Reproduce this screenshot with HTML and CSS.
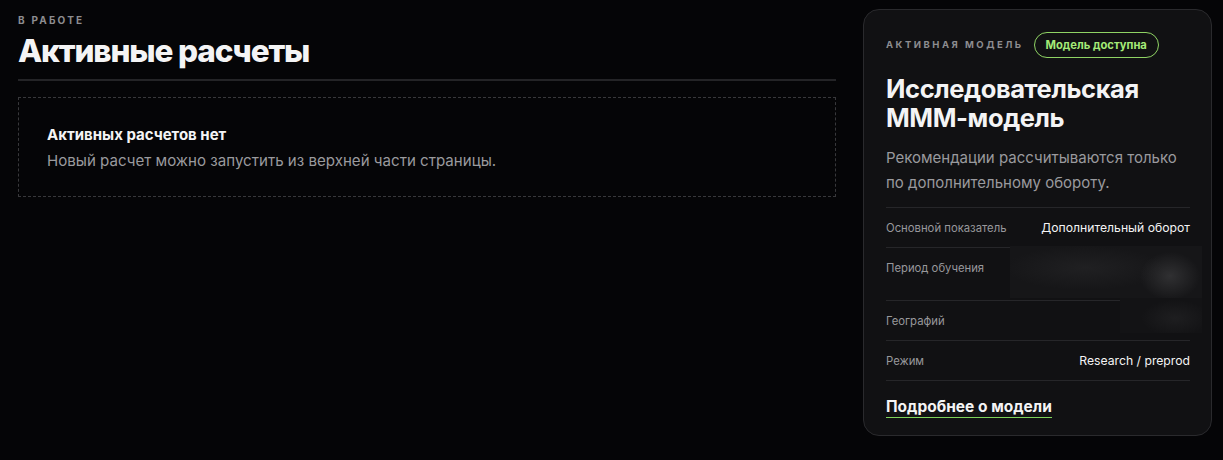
FILE: index.html
```html
<!DOCTYPE html>
<html lang="ru">
<head>
  <meta charset="UTF-8">
  <title>Активные расчеты</title>
  <link rel="stylesheet" href="styles.css">
</head>
<body>

<div class="page">
  <section class="runs">
    <div class="eyebrow">В работе</div>
    <h1>Активные расчеты</h1>
    <div class="empty">
      <h3>Активных расчетов нет</h3>
      <p>Новый расчет можно запустить из верхней части страницы.</p>
    </div>
  </section>

  <aside class="model-card">
    <div class="card-head">
      <span class="eyebrow small">Активная модель</span>
      <span class="badge">Модель доступна</span>
    </div>
    <h2>Исследовательская ММM-модель</h2>
    <p class="desc">Рекомендации рассчитываются только по дополнительному обороту.</p>

    <div class="facts">
      <div class="fact">
        <span class="label">Основной показатель</span>
        <span class="value">Дополнительный оборот</span>
      </div>
      <div class="fact tall">
        <span class="label">Период обучения</span>
        <span class="value"></span>
      </div>
      <div class="fact">
        <span class="label">Географий</span>
        <span class="value"></span>
      </div>
      <div class="fact">
        <span class="label">Режим</span>
        <span class="value">Research / preprod</span>
      </div>
      <div class="redact one"></div>
      <div class="redact two"></div>
    </div>

    <a class="more" href="#">Подробнее о модели</a>
  </aside>
</div>

</body>
</html>
```

FILE: styles.css
```css
body {
  margin: 0;
  background: #050507;
  color: #f4f4f5;
  font-family: Inter, "Noto Sans", sans-serif;
}
.page {
  display: grid;
  grid-template-columns: 1fr 349px;
  gap: 27px;
  padding: 9px 11px 0 18px;
  align-items: start;
}
.runs {
  padding-top: 4px;
}
.eyebrow {
  font-size: 10px;
  line-height: 14px;
  font-weight: 700;
  letter-spacing: 2.2px;
  text-transform: uppercase;
  color: #8d8d90;
}
h1 {
  margin: 5px 0 0;
  font-size: 31.5px;
  line-height: 38px;
  font-weight: 800;
  letter-spacing: -1.15px;
  padding-bottom: 9px;
  border-bottom: 2px solid #242427;
}
.empty {
  margin-top: 16px;
  border: 1px dashed #38383b;
  padding: 26px 28px 24px;
}
.empty h3 {
  margin: 0;
  font-size: 15px;
  line-height: 22px;
  font-weight: 700;
}
.empty p {
  margin: 4px 0 0;
  font-size: 15.1px;
  line-height: 22px;
  color: #9a9a9e;
}
.model-card {
  background: #111113;
  border: 1px solid #2a2a2d;
  border-radius: 16px;
  padding: 22px 21px 17px 22px;
}
.card-head {
  display: flex;
  align-items: center;
  gap: 10px;
}
.eyebrow.small {
  font-size: 9.5px;
  letter-spacing: 2.5px;
}
.badge {
  border: 1px solid #8fd364;
  border-radius: 13px;
  padding: 0 11px;
  height: 24px;
  line-height: 24px;
  font-size: 11.2px;
  font-weight: 700;
  color: #a4ea77;
}
h2 {
  margin: 16px 0 0;
  font-size: 25.5px;
  line-height: 29px;
  font-weight: 700;
  letter-spacing: -0.4px;
}
.desc {
  margin: 13px 0 0;
  font-size: 15px;
  line-height: 25px;
  color: #9a9a9e;
}
.facts {
  position: relative;
  margin-top: 12px;
  border-top: 1px solid #262629;
}
.fact {
  display: flex;
  justify-content: space-between;
  align-items: flex-start;
  padding: 12px 0 11px;
  border-bottom: 1px solid #262629;
  font-size: 11.3px;
  line-height: 16px;
}
.fact.tall {
  padding-bottom: 24px;
}
.label {
  color: #98989c;
}
.value {
  font-size: 12.2px;
  color: #f4f4f5;
}
.redact {
  position: absolute;
}
.redact.one {
  top: 38px;
  left: 124px;
  width: 192px;
  height: 52px;
  background: radial-gradient(ellipse 30px 24px at 160px 30px, #303032, transparent),
              radial-gradient(ellipse 80px 22px at 75px 22px, #202022, transparent),
              #161618;
}
.redact.two {
  top: 90px;
  left: 234px;
  width: 82px;
  height: 35px;
  background: radial-gradient(ellipse 34px 18px at 55px 20px, #1e1e20, transparent), #131315;
}
.more {
  display: inline-block;
  margin-top: 16px;
  font-size: 15.5px;
  line-height: 20px;
  font-weight: 700;
  color: #f4f4f5;
  text-decoration: none;
  border-bottom: 1px solid #7ed35a;
}
```
